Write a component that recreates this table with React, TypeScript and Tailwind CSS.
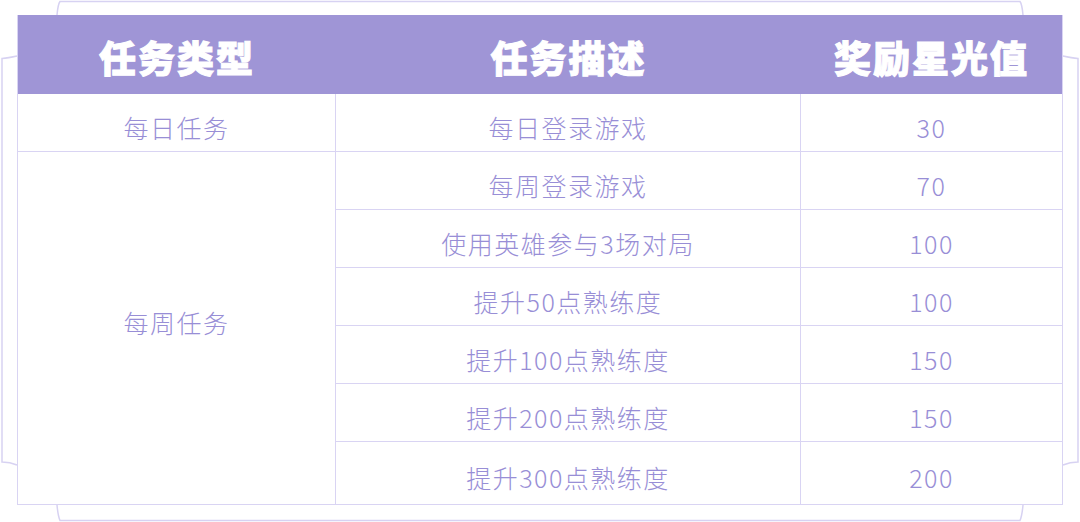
const rows = [
  { desc: '每日登录游戏', reward: '30' },
  { desc: '每周登录游戏', reward: '70' },
  { desc: '使用英雄参与3场对局', reward: '100' },
  { desc: '提升50点熟练度', reward: '100' },
  { desc: '提升100点熟练度', reward: '150' },
  { desc: '提升200点熟练度', reward: '150' },
  { desc: '提升300点熟练度', reward: '200' },
];

const cjk = { fontFamily: '"Noto Sans CJK SC", "Noto Sans", sans-serif' };

// decorative offset frame behind the table
function Frame() {
  return (
    <svg className="absolute inset-0 pointer-events-none" width="1080" height="522" viewBox="0 0 1080 522" fill="none">
      <g stroke="#d7d2f2" strokeWidth="1.5">
        <path d="M57 15 Q58 4 60 1.5 L1020 1.5 Q1022 4 1023 15" />
        <path d="M57 505 Q58 516 60 520.5 L1020 520.5 Q1022 516 1023 505" />
        <path d="M17 56 Q8 58 2 58.5 L2 462 Q10 462 17 465" />
        <path d="M1063 56 Q1072 58 1078 58.5 L1078 462 Q1070 462 1063 465" />
      </g>
    </svg>
  );
}

function Cell({ children, className = '' }: { children: React.ReactNode; className?: string }) {
  return (
    <div className={`flex items-center justify-center text-[25px] font-light tracking-[1.5px] text-[#988ed6] ${className}`}>
      {children}
    </div>
  );
}

export default function App() {
  return (
    <div className="relative w-[1080px] h-[522px] bg-white overflow-hidden" style={cjk}>
      <Frame />
      <div className="relative ml-[17px] mt-[15px] w-[1046px] border-x border-b border-[#d9d4f3] bg-white">
        {/* header */}
        <div className="grid grid-cols-[318px_465px_1fr] h-[79px] bg-[#9f95d6] text-white text-[37px] font-black tracking-[2px] [-webkit-text-stroke:1px_white]">
          <div className="flex items-center justify-center pt-[6px]">任务类型</div>
          <div className="flex items-center justify-center pt-[6px]">任务描述</div>
          <div className="flex items-center justify-center pt-[6px]">奖励星光值</div>
        </div>

        {/* body */}
        <div className="grid grid-cols-[318px_465px_1fr] grid-rows-[58px_58px_58px_58px_58px_58px_62px]">
          <Cell className="border-r border-b border-[#d9d4f3] pt-[10px]">每日任务</Cell>
          <Cell className="border-r border-b border-[#d9d4f3] pt-[10px]">{rows[0].desc}</Cell>
          <Cell className="border-b border-[#d9d4f3] pt-[10px]">{rows[0].reward}</Cell>

          <Cell className="row-span-6 border-r border-[#d9d4f3] pb-[10px]">每周任务</Cell>
          {rows.slice(1).map((r, i) => {
            const last = i === rows.length - 2;
            return [
              <Cell key={`d${i}`} className={`border-r border-[#d9d4f3] pt-[10px] ${last ? '' : 'border-b'}`}>
                {r.desc}
              </Cell>,
              <Cell key={`r${i}`} className={`border-[#d9d4f3] pt-[10px] ${last ? '' : 'border-b'}`}>
                {r.reward}
              </Cell>,
            ];
          })}
        </div>
      </div>
    </div>
  );
}
